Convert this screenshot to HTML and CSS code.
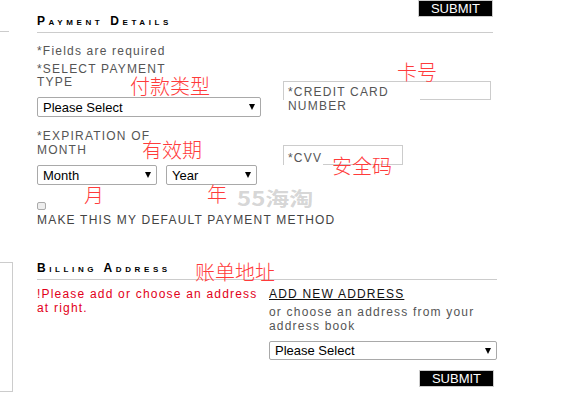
FILE: index.html
```html
<!DOCTYPE html>
<html>
<head>
    <title>Payment Details</title>
    <meta name="viewport" content="width=device-width, initial-scale=1.0">
    <link rel="stylesheet" href="styles.css">
</head>
<body>
    <div class="page">
        <aside class="side">
            <div class="side-rule"></div>
            <div class="side-box"></div>
        </aside>

        <main class="main">
            <section class="payment">
                <div class="bar">
                    <button class="submit">SUBMIT</button>
                </div>
                <h2 class="title">Payment Details</h2>
                <div class="cols">
                    <div class="col">
                        <p class="required">*Fields are required</p>
                        <p class="label label-type">*SELECT PAYMENT TYPE</p>
                        <div class="select select-type"><span>Please Select</span><i class="caret"></i></div>
                        <p class="label label-exp">*EXPIRATION OF MONTH</p>
                        <div class="row">
                            <div class="select select-month"><span>Month</span><i class="caret"></i></div>
                            <div class="select select-year"><span>Year</span><i class="caret"></i></div>
                        </div>
                        <input type="checkbox" class="check">
                        <p class="default">MAKE THIS MY DEFAULT PAYMENT METHOD</p>
                    </div>
                    <div class="col">
                        <div class="box box-card"><span class="box-label">*CREDIT CARD NUMBER</span></div>
                        <div class="box box-cvv"><span class="box-label">*CVV</span></div>
                    </div>
                </div>
            </section>

            <section class="billing">
                <h2 class="title">Billing Address</h2>
                <div class="cols cols-billing">
                    <div class="col">
                        <p class="warn">!Please add or choose an address at right.</p>
                    </div>
                    <div class="col">
                        <a href="#" class="add-link">ADD NEW ADDRESS</a>
                        <p class="choose">or choose an address from your address book</p>
                        <div class="select select-book"><span>Please Select</span><i class="caret"></i></div>
                        <div class="bar bar-bottom">
                            <button class="submit">SUBMIT</button>
                        </div>
                    </div>
                </div>
            </section>
        </main>

        <!-- 标注 -->
        <span class="note note-type">付款类型</span>
        <span class="note note-card">卡号</span>
        <span class="note note-exp">有效期</span>
        <span class="note note-cvv">安全码</span>
        <span class="note note-month">月</span>
        <span class="note note-year">年</span>
        <span class="note note-bill">账单地址</span>
        <span class="watermark">55海淘</span>
    </div>
</body>
</html>
```

FILE: styles.css
```css
:root {
    --line-color: #ccc;
    --text-color: #555;
    --note-color: #ff3b3b;
}

* {
    box-sizing: border-box;
}

body {
    margin: 0;
    font-family: "Liberation Sans", Arial, sans-serif;
    font-size: 12px;
    letter-spacing: 0.1em;
    color: var(--text-color);
    background: #fff;
}

p {
    margin: 0;
}

.page {
    position: relative;
    display: flex;
    width: 563px;
    height: 413px;
    overflow: hidden;
}

/* 左侧被截掉的部分 */
.side {
    width: 13px;
    flex-shrink: 0;
}

.side-rule {
    margin-top: 31px;
    width: 9px;
    border-top: 1px solid var(--line-color);
}

.side-box {
    margin-top: 230px;
    margin-left: -1px;
    width: 14px;
    height: 130px;
    border: 1px solid var(--line-color);
}

.main {
    margin-left: 24px;
    width: 460px;
}

.payment {
    width: 456px;
}

.bar {
    display: flex;
    justify-content: flex-end;
}

.submit {
    width: 75px;
    height: 17px;
    padding: 0;
    border: 1px solid var(--line-color);
    background: #000;
    color: #fff;
    font-family: "Liberation Sans", Arial, sans-serif;
    font-size: 13px;
    line-height: 15px;
    letter-spacing: 0;
}

.title {
    margin: -2px 0 0;
    padding-bottom: 4px;
    border-bottom: 1px solid var(--line-color);
    font-size: 12px;
    line-height: 13px;
    font-weight: bold;
    font-variant: small-caps;
    letter-spacing: 3.6px;
    color: #000;
}

.cols {
    display: grid;
    grid-template-columns: 224px 1fr;
    column-gap: 22px;
}

.required {
    margin-top: 12px;
    line-height: 13px;
}

.label {
    max-width: 140px;
    line-height: 13px;
}

.label-type {
    margin-top: 5px;
}

.label-exp {
    margin-top: 12px;
    line-height: 14px;
}

.select {
    display: flex;
    justify-content: space-between;
    align-items: center;
    height: 20px;
    padding: 0 5px 0 5px;
    border: 1px solid #a9a9a9;
    border-radius: 2px;
    background: #fff;
    color: #000;
    font-size: 13px;
    letter-spacing: 0;
}

.caret {
    width: 0;
    height: 0;
    border-left: 3.5px solid transparent;
    border-right: 3.5px solid transparent;
    border-top: 6px solid #000;
}

.select-type {
    margin-top: 8px;
    width: 224px;
}

.row {
    display: flex;
    gap: 9px;
    margin-top: 8px;
}

.select-month {
    width: 120px;
}

.select-year {
    width: 91px;
}

.check {
    -webkit-appearance: none;
    appearance: none;
    display: block;
    margin: 17px 0 0;
    width: 9px;
    height: 8px;
    border: 1px solid #aaa;
    border-radius: 2px;
    background: #eee;
}

.default {
    margin-top: 4px;
    line-height: 13px;
    white-space: nowrap;
    color: #444;
}

.box {
    height: 19px;
    border: 1px solid var(--line-color);
}

.box-card {
    margin-top: 48px;
    width: 208px;
}

.box-cvv {
    margin-top: 45px;
    width: 120px;
    height: 20px;
}

.box-label {
    display: block;
    background: #fff;
    line-height: 14px;
}

.box-card .box-label {
    margin-top: 3px;
    width: 136px;
    padding-left: 4px;
}

.box-cvv .box-label {
    margin-top: 5px;
    width: fit-content;
    padding: 0 1px 0 4px;
}

.billing {
    margin-top: 35px;
}

.billing .title {
    margin-top: 0;
}

.cols-billing {
    column-gap: 8px;
}

.warn {
    margin-top: 7px;
    line-height: 14px;
    color: #e2001a;
}

.add-link {
    display: block;
    margin-top: 7px;
    width: fit-content;
    line-height: 14px;
    color: #111;
    text-decoration: underline;
}

.choose {
    margin-top: 4px;
    line-height: 14px;
}

.select-book {
    margin-top: 8px;
    width: 228px;
    height: 19px;
}

.bar-bottom {
    margin-top: 10px;
    margin-right: 3px;
}

/* 红色标注 */
.note {
    position: absolute;
    font-family: "Noto Sans CJK SC", sans-serif;
    font-size: 20px;
    line-height: 20px;
    font-weight: 300;
    letter-spacing: 0;
    color: var(--note-color);
}

.note-type { left: 130px; top: 76px; }
.note-card { left: 397px; top: 62px; }
.note-exp { left: 142px; top: 140px; }
.note-cvv { left: 332px; top: 156px; }
.note-month { left: 84px; top: 185px; }
.note-year { left: 207px; top: 184px; }
.note-bill { left: 195px; top: 262px; }

.watermark {
    position: absolute;
    left: 237px;
    top: 188px;
    font-family: "Noto Sans CJK SC", sans-serif;
    font-size: 24px;
    line-height: 24px;
    font-weight: bold;
    letter-spacing: 0;
    color: rgba(150, 150, 150, 0.4);
    transform: scaleY(0.82);
    transform-origin: top left;
}
```
